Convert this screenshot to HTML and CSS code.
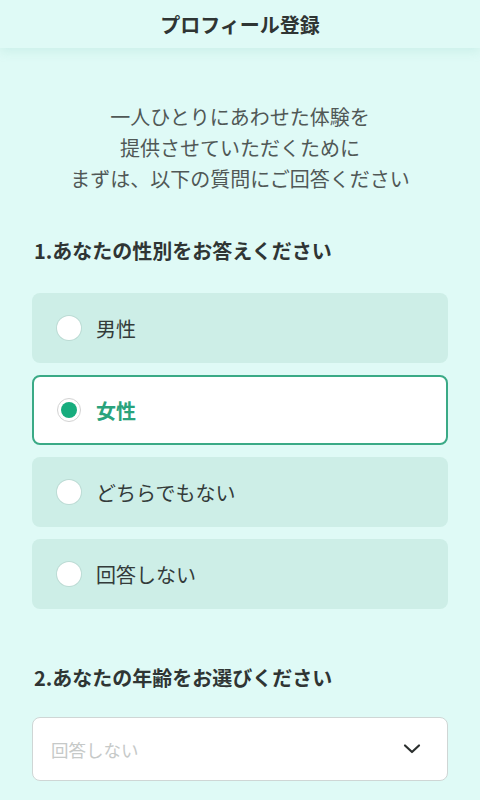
FILE: index.html
```html
<!DOCTYPE html>
<html lang="ja">
  <head>
    <meta charset="utf-8" />
    <title>プロフィール登録</title>
    <link rel="stylesheet" href="styles.css">
  </head>
  <body>
    <header class="topbar">
      <h1>プロフィール登録</h1>
    </header>

    <main class="content">
      <p class="intro">一人ひとりにあわせた体験を<br>提供させていただくために<br>まずは、以下の質問にご回答ください</p>

      <section class="question">
        <h2>1.あなたの性別をお答えください</h2>
        <div class="options">
          <label class="option"><span class="radio"></span>男性</label>
          <label class="option selected"><span class="radio"></span>女性</label>
          <label class="option"><span class="radio"></span>どちらでもない</label>
          <label class="option"><span class="radio"></span>回答しない</label>
        </div>
      </section>

      <section class="question age">
        <h2>2.あなたの年齢をお選びください</h2>
        <div class="select">
          <span class="placeholder">回答しない</span>
          <svg class="chevron" width="18" height="12" viewBox="0 0 18 12">
            <path d="M2 2.5 L9 9 L16 2.5" fill="none" stroke="#2b2f2e" stroke-width="2.2" stroke-linecap="round" stroke-linejoin="round"/>
          </svg>
        </div>
      </section>
    </main>
  </body>
</html>
```

FILE: styles.css
```css
body {
  margin: 0;
  background-color: #dffaf6;
  color: #333b3a;
  font-family: "Noto Sans CJK JP", "Noto Sans", sans-serif;
}

.topbar {
  height: 48px;
  display: flex;
  align-items: center;
  justify-content: center;
  background-color: #dffaf6;
  box-shadow: 0 4px 10px rgba(120, 200, 185, 0.18);
}

.topbar h1 {
  margin: 0;
  font-size: 20px;
  font-weight: bold;
  color: #2f3534;
}

.content {
  padding: 0 32px;
}

.intro {
  margin: 53px 0 0;
  text-align: center;
  font-size: 20px;
  line-height: 31px;
  color: #505856;
}

.question h2 {
  margin: 43px 0 0 2px;
  font-size: 20px;
  line-height: 28px;
  font-weight: bold;
  color: #2f3534;
}

.options {
  display: flex;
  flex-direction: column;
  gap: 12px;
  margin-top: 28px;
}

.option {
  display: flex;
  align-items: center;
  gap: 15px;
  height: 70px;
  padding: 0 25px;
  box-sizing: border-box;
  background-color: #cdeee7;
  border-radius: 8px;
  font-size: 20px;
  color: #333b3a;
}

.option.selected {
  background-color: #fff;
  border: 2px solid #3aaa86;
  padding: 0 23px;
  font-weight: bold;
  color: #2aa37c;
}

.radio {
  width: 24px;
  height: 24px;
  border-radius: 50%;
  background-color: #fff;
  box-shadow: 0 0 0 1px rgba(0, 0, 0, 0.08);
  box-sizing: border-box;
  position: relative;
}

.option.selected .radio {
  border: 1px solid #d2d2d2;
  box-shadow: none;
}

.option.selected .radio::after {
  content: "";
  position: absolute;
  top: 3px;
  left: 3px;
  width: 16px;
  height: 16px;
  border-radius: 50%;
  background-color: #17ad7e;
}

.question.age h2 {
  margin-top: 55px;
}

.select {
  display: flex;
  align-items: center;
  justify-content: space-between;
  margin-top: 25px;
  height: 64px;
  padding: 0 26px 0 18px;
  box-sizing: border-box;
  background-color: #fff;
  border: 1px solid #cfd6d5;
  border-radius: 8px;
}

.placeholder {
  font-size: 17.5px;
  color: #c6c9c8;
}
```
